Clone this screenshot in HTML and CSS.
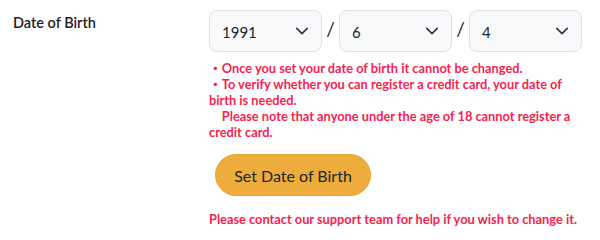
FILE: index.html
```html
<!DOCTYPE html>
<html lang="en">
<head>
<meta charset="utf-8">
<link rel="stylesheet" href="styles.css">
</head>
<body>
<div class="row">
  <div class="label">Date of Birth</div>
  <div class="field">
    <div class="selects">
      <div class="select"><span>1991</span><svg class="chev" viewBox="0 0 16 16"><path d="M2 5l6 6 6-6" fill="none" stroke="#343a40" stroke-width="2" stroke-linecap="round" stroke-linejoin="round"/></svg></div>
      <span class="sep">/</span>
      <div class="select"><span>6</span><svg class="chev" viewBox="0 0 16 16"><path d="M2 5l6 6 6-6" fill="none" stroke="#343a40" stroke-width="2" stroke-linecap="round" stroke-linejoin="round"/></svg></div>
      <span class="sep">/</span>
      <div class="select"><span>4</span><svg class="chev" viewBox="0 0 16 16"><path d="M2 5l6 6 6-6" fill="none" stroke="#343a40" stroke-width="2" stroke-linecap="round" stroke-linejoin="round"/></svg></div>
    </div>
    <p class="note">・Once you set your date of birth it cannot be changed.<br>・To verify whether you can register a credit card, your date of birth is needed.<br>　Please note that anyone under the age of 18 cannot register a credit card.</p>
    <button class="btn">Set Date of Birth</button>
    <p class="note contact">Please contact our support team for help if you wish to change it.</p>
  </div>
</div>
</body>
</html>
```

FILE: styles.css
```css
html, body {
  margin: 0;
  padding: 0;
  background: #fff;
}
body {
  font-family: Lato, "Noto Sans CJK JP", sans-serif;
  color: #212529;
}
.row {
  display: flex;
  padding-top: 10px;
}
.label {
  width: 196px;
  padding-left: 13px;
  padding-top: 1px;
  font-size: 14.5px;
  font-weight: 600;
  line-height: 24px;
  color: #1f2328;
}
.field {
  display: flex;
  flex-direction: column;
  align-items: flex-start;
  width: 374px;
}
.selects {
  display: flex;
  align-items: center;
}
.select {
  box-sizing: border-box;
  width: 113px;
  height: 42px;
  border: 1px solid #dee2e6;
  border-radius: 8px;
  background: #f8f9fa;
  display: flex;
  align-items: center;
  justify-content: space-between;
  padding: 2px 12px 0 12px;
  font-size: 15px;
  color: #212529;
}
.chev {
  width: 14px;
  height: 14px;
  margin-top: -2px;
}
.sep {
  width: 17px;
  text-align: center;
  font-size: 19px;
  color: #212529;
  margin-top: -6px;
}
.note {
  margin: 8px 0 0 0;
  font-size: 12.8px;
  font-weight: 700;
  line-height: 16px;
  color: #f5244f;
}
.btn {
  margin: 14px 0 0 6px;
  width: 156px;
  height: 42px;
  border-radius: 21px;
  border: 1px solid #e8a636;
  background: #eeac3c;
  font-family: Lato, sans-serif;
  font-size: 16px;
  color: #212529;
  padding: 0;
}
.contact {
  margin-top: 15px;
  white-space: nowrap;
}
```
